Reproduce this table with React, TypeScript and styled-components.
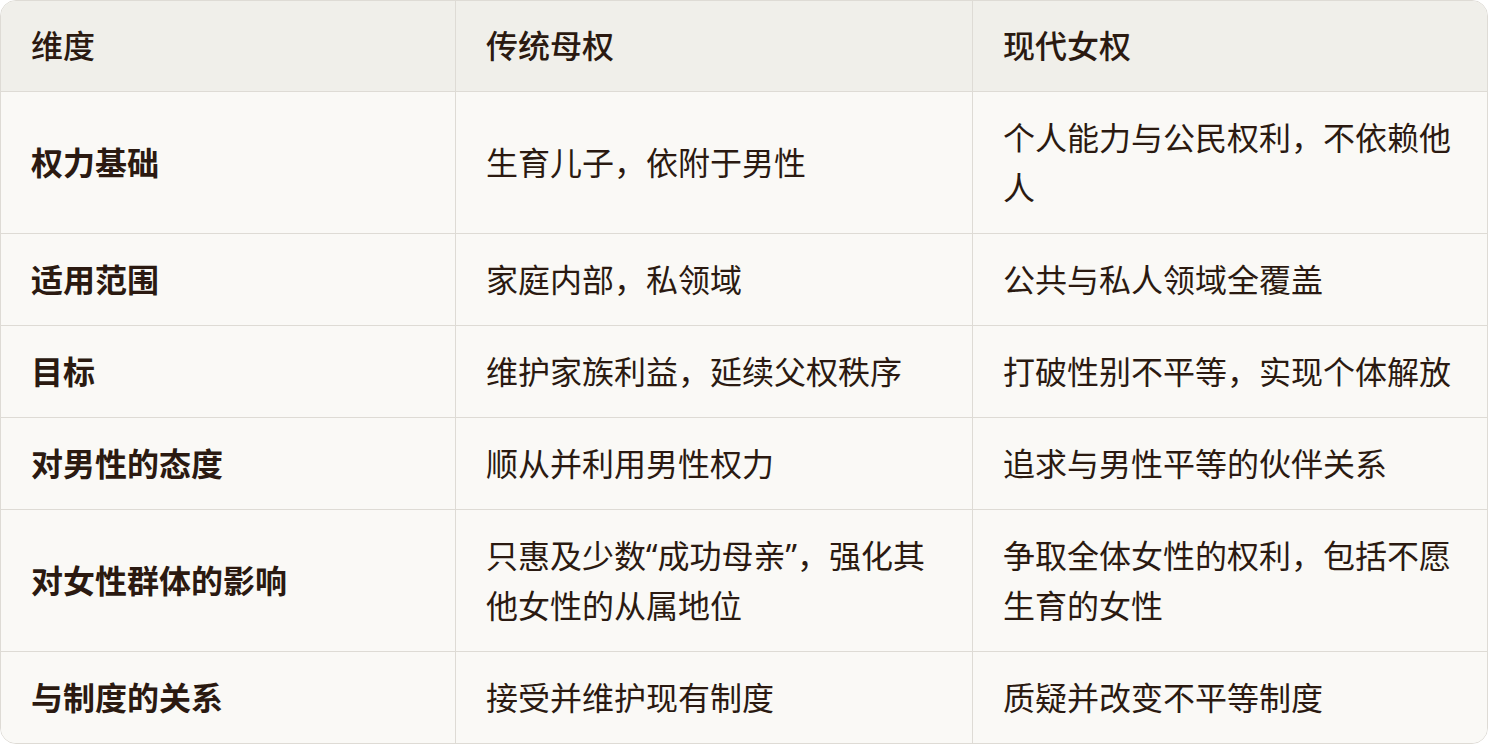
import React from "react";
import styled, { createGlobalStyle } from "styled-components";

const Global = createGlobalStyle`
  html, body { margin: 0; padding: 0; background: #ffffff; }
  body { font-family: "Noto Sans", "Noto Sans CJK SC", sans-serif; }
`;

const Table = styled.table`
  width: 1488px;
  border-collapse: separate;
  border-spacing: 0;
  border: 1px solid #dedbd5;
  border-radius: 16px;
  overflow: hidden;
  table-layout: fixed;
  color: #2b1a11;
  font-family: "Noto Sans", "Noto Sans CJK SC", sans-serif;
  font-size: 32px;
  line-height: 50px;
  box-sizing: border-box;
`;

const HeadCell = styled.th<{ first?: boolean }>`
  background: #f0efea;
  text-align: left;
  font-weight: 500;
  padding: 20px 32px 20px 30px;
  height: 50px;
  border-bottom: 1px solid #dedbd5;
  border-left: ${(p) => (p.first ? "none" : "1px solid #dedbd5")};
  vertical-align: middle;
`;

const Cell = styled.td<{ first?: boolean; last?: boolean }>`
  background: #faf9f6;
  padding: 20.5px 32px 20.5px 30px;
  font-weight: ${(p) => (p.first ? 700 : 400)};
  border-bottom: ${(p) => (p.last ? "none" : "1px solid #dedbd5")};
  border-left: ${(p) => (p.first ? "none" : "1px solid #dedbd5")};
  vertical-align: middle;
  word-break: break-all;
`;

const rows: [string, string, string][] = [
  ["权力基础", "生育儿子，依附于男性", "个人能力与公民权利，不依赖他人"],
  ["适用范围", "家庭内部，私领域", "公共与私人领域全覆盖"],
  ["目标", "维护家族利益，延续父权秩序", "打破性别不平等，实现个体解放"],
  ["对男性的态度", "顺从并利用男性权力", "追求与男性平等的伙伴关系"],
  ["对女性群体的影响", "只惠及少数“成功母亲”，强化其他女性的从属地位", "争取全体女性的权利，包括不愿生育的女性"],
  ["与制度的关系", "接受并维护现有制度", "质疑并改变不平等制度"],
];

export default function App() {
  return (
    <>
      <Global />
      <Table>
        <colgroup>
          <col style={{ width: "454px" }} />
          <col style={{ width: "517px" }} />
          <col />
        </colgroup>
        <thead>
          <tr>
            <HeadCell first>维度</HeadCell>
            <HeadCell>传统母权</HeadCell>
            <HeadCell>现代女权</HeadCell>
          </tr>
        </thead>
        <tbody>
          {rows.map((r, i) => (
            <tr key={i}>
              <Cell first last={i === rows.length - 1}>{r[0]}</Cell>
              <Cell last={i === rows.length - 1}>{r[1]}</Cell>
              <Cell last={i === rows.length - 1}>{r[2]}</Cell>
            </tr>
          ))}
        </tbody>
      </Table>
    </>
  );
}
